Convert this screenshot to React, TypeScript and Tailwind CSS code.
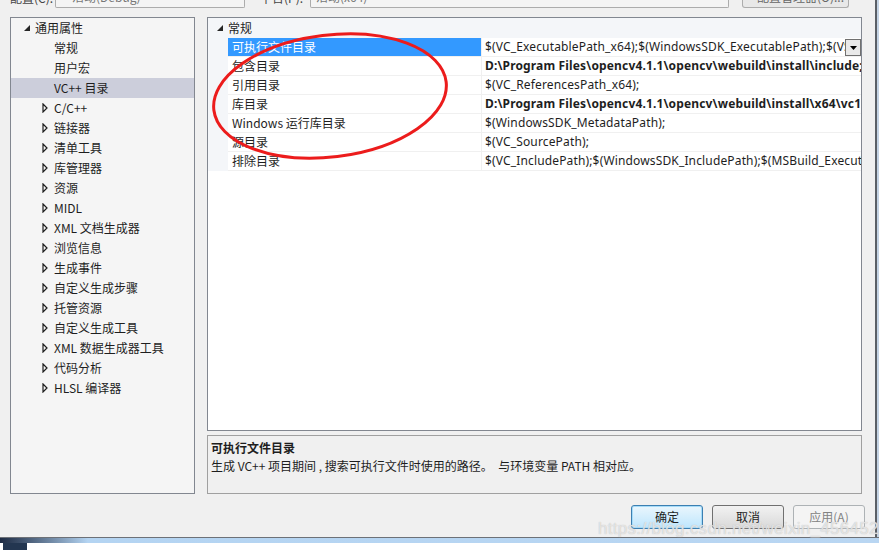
const cjk = "font-['Noto_Sans_CJK_SC',sans-serif]";
const ui = "font-['Noto_Sans','Noto_Sans_CJK_SC',sans-serif]";

type Node = { label: string; level: 0 | 1; open?: boolean; arrow?: boolean; selected?: boolean };

const tree: Node[] = [
  { label: '通用属性', level: 0, open: true },
  { label: '常规', level: 1 },
  { label: '用户宏', level: 1 },
  { label: 'VC++ 目录', level: 1, selected: true },
  { label: 'C/C++', level: 1, arrow: true },
  { label: '链接器', level: 1, arrow: true },
  { label: '清单工具', level: 1, arrow: true },
  { label: '库管理器', level: 1, arrow: true },
  { label: '资源', level: 1, arrow: true },
  { label: 'MIDL', level: 1, arrow: true },
  { label: 'XML 文档生成器', level: 1, arrow: true },
  { label: '浏览信息', level: 1, arrow: true },
  { label: '生成事件', level: 1, arrow: true },
  { label: '自定义生成步骤', level: 1, arrow: true },
  { label: '托管资源', level: 1, arrow: true },
  { label: '自定义生成工具', level: 1, arrow: true },
  { label: 'XML 数据生成器工具', level: 1, arrow: true },
  { label: '代码分析', level: 1, arrow: true },
  { label: 'HLSL 编译器', level: 1, arrow: true },
];

const props = [
  { name: '可执行文件目录', value: '$(VC_ExecutablePath_x64);$(WindowsSDK_ExecutablePath);$(VS_ExecutablePath);$(MSBuild_ExecutablePath)', selected: true },
  { name: '包含目录', value: 'D:\\Program Files\\opencv4.1.1\\opencv\\webuild\\install\\include;D:\\Program Files\\opencv4.1.1\\opencv\\webuild\\install\\include\\opencv2;$(IncludePath)', bold: true },
  { name: '引用目录', value: '$(VC_ReferencesPath_x64);' },
  { name: '库目录', value: 'D:\\Program Files\\opencv4.1.1\\opencv\\webuild\\install\\x64\\vc16\\lib;$(LibraryPath)', bold: true },
  { name: 'Windows 运行库目录', value: '$(WindowsSDK_MetadataPath);' },
  { name: '源目录', value: '$(VC_SourcePath);' },
  { name: '排除目录', value: '$(VC_IncludePath);$(WindowsSDK_IncludePath);$(MSBuild_ExecutablePath);$(VC_LibraryPath_x64);' },
];

const OpenTri = () => (
  <svg width="6" height="6" viewBox="0 0 6 6"><polygon points="6,0 6,6 0,6" fill="#262626" /></svg>
);

const ClosedTri = () => (
  <svg width="6" height="10" viewBox="0 0 6 10"><polygon points="1,1 5,5 1,9" fill="none" stroke="#1e1e1e" strokeWidth="1.2" /></svg>
);

export default function App() {
  return (
    <div className="relative w-[879px] h-[550px] overflow-hidden bg-[#f0f0f0] flex flex-col">
      <div className="flex h-[537px]">
        <div className="w-[875px] flex flex-col">
          {/* clipped top toolbar */}
          <div className={`h-[17px] flex items-start text-[12px] text-[#444] ${cjk}`}>
            <div className="h-[8px] w-[56px] pl-[10px] overflow-hidden relative">
              <span className="absolute left-[10px] -top-[9px] leading-[14px]">配置(C):</span>
            </div>
            <div className="h-[8px] w-[190px] ml-[-1px] border-x border-b border-[#acacac] rounded-b-[2px] bg-[#f4f4f4] overflow-hidden relative">
              <span className="absolute left-[16px] -top-[10px] leading-[14px] text-[#777]">活动(Debug)</span>
            </div>
            <div className="h-[8px] w-[65px] overflow-hidden relative">
              <span className="absolute left-[15px] -top-[9px] leading-[14px]">平台(P):</span>
            </div>
            <div className="h-[8px] w-[419px] border-x border-b border-[#acacac] rounded-b-[2px] bg-[#f4f4f4] overflow-hidden relative">
              <span className="absolute left-[5px] -top-[10px] leading-[14px] text-[#777]">活动(x64)</span>
            </div>
            <div className="h-[8px] w-[107px] ml-[13px] border-x border-b border-[#acacac] rounded-b-[3px] bg-[#e8e8e8] overflow-hidden relative">
              <span className="absolute left-[14px] -top-[10px] leading-[14px] text-[#666]">配置管理器(O)...</span>
            </div>
          </div>

          <div className="flex h-[477px] pl-[10px]">
            {/* left tree */}
            <div className={`w-[185px] h-[477px] border border-[#828790] bg-[#f5f5f5] ${cjk}`}>
              {tree.map((n) => (
                <div
                  key={n.label}
                  className={`h-[20px] flex items-center text-[12px] text-[#1e1e1e] ${n.selected ? 'bg-[#cccedb]' : ''}`}
                >
                  {n.level === 0 ? (
                    <>
                      <span className="w-[24px] flex justify-end pr-[5px]"><OpenTri /></span>
                      <span>{n.label}</span>
                    </>
                  ) : (
                    <>
                      <span className="w-[43px] flex justify-end pr-[6px]">{n.arrow && <ClosedTri />}</span>
                      <span>{n.label}</span>
                    </>
                  )}
                </div>
              ))}
            </div>

            <div className="w-[655px] ml-[12px] flex flex-col">
              {/* property grid */}
              <div className="h-[414px] border border-[#828790] bg-white overflow-hidden">
                <div className="flex h-[20px] bg-[#f4f6f9]">
                  <span className="w-[20px] flex justify-end items-center pr-[5px]"><OpenTri /></span>
                  <span className={`text-[12px] text-[#1e1e1e] flex items-center ${cjk}`}>常规</span>
                </div>
                {props.map((p) => (
                  <div key={p.name} className="flex h-[19px]">
                    <div className="w-[20px] bg-[#f4f6f9]" />
                    <div
                      className={`w-[253px] flex items-center pl-[4px] text-[12px] border-b border-[#f0f0f0] ${cjk} ${
                        p.selected ? 'bg-[#3399ff] text-white border-[#3399ff]' : 'text-[#1e1e1e]'
                      }`}
                    >
                      {p.name}
                    </div>
                    <div className="w-px bg-[#f0f0f0]" />
                    <div className="flex-1 relative flex items-center pl-[3px] border-b border-[#f0f0f0] overflow-hidden">
                      <span className={`whitespace-nowrap text-[12px] tracking-[0.15px] text-[#1e1e1e] ${ui} ${p.bold ? 'font-bold' : ''}`}>
                        {p.value}
                      </span>
                      {p.selected && (
                        <div className="absolute right-0 top-[1px] w-[16px] h-[17px] border border-[#707070] bg-[#e9e9e9] flex items-center justify-center">
                          <svg width="7" height="4" viewBox="0 0 7 4"><polygon points="0,0 7,0 3.5,4" fill="#000" /></svg>
                        </div>
                      )}
                    </div>
                  </div>
                ))}
              </div>

              {/* description */}
              <div className={`mt-[4px] h-[59px] border border-[#a0a0a0] bg-[#f0f0f0] px-[3px] pt-[3px] text-[12px] text-[#1e1e1e] ${cjk}`}>
                <div className="font-bold leading-[18px]">可执行文件目录</div>
                <div className="leading-[18px] whitespace-pre">生成 VC++ 项目期间 , 搜索可执行文件时使用的路径。  与环境变量 PATH 相对应。</div>
              </div>
            </div>
          </div>

          {/* buttons */}
          <div className={`flex pl-[631px] pt-[11px] gap-[9px] text-[12px] ${cjk}`}>
            <button className="w-[72px] h-[24px] rounded-[3px] border border-[#3c7fb1] bg-gradient-to-b from-[#eaf6fd] to-[#bee6fd] shadow-[inset_0_0_0_1px_#a6dcf9] text-[#1e1e1e]">确定</button>
            <button className="w-[72px] h-[24px] rounded-[3px] border border-[#707070] bg-gradient-to-b from-[#f2f2f2] to-[#d9d9d9] text-[#1e1e1e]">取消</button>
            <button className="w-[72px] h-[24px] rounded-[3px] border border-[#adb2b5] bg-[#f4f4f4] text-[#838383]">应用(A)</button>
          </div>
        </div>
        <div className="w-[4px] border-l-2 border-[#5a5f66] bg-[#c4d3e4]" />
      </div>

      {/* taskbar fragment */}
      <div className="h-[13px] border-t border-[#6d7177] flex flex-col">
        <div className="h-[5px] bg-gradient-to-r from-[#1e2c44] via-[#b4d4f2] via-[10%] to-[#b9d6f2]" />
        <div className="flex-1 bg-white flex">
          <div className="ml-[3px] w-[24px] bg-[#233650]" />
        </div>
      </div>

      {/* watermark */}
      <div className="absolute left-[598px] top-[516px] text-[17px] tracking-[0.3px] text-white/60 font-['Liberation_Sans',sans-serif] [text-shadow:0_0_1px_#b0b0b0] pointer-events-none whitespace-nowrap">
        https://blog.csdn.net/weixin_45645281
      </div>

      {/* red hand-drawn annotation */}
      <svg className="absolute left-0 top-0 pointer-events-none" width="879" height="550">
        <ellipse cx="330" cy="96" rx="117" ry="61" transform="rotate(-7 330 96)" fill="none" stroke="#ec1c1c" strokeWidth="3" />
      </svg>
    </div>
  );
}
